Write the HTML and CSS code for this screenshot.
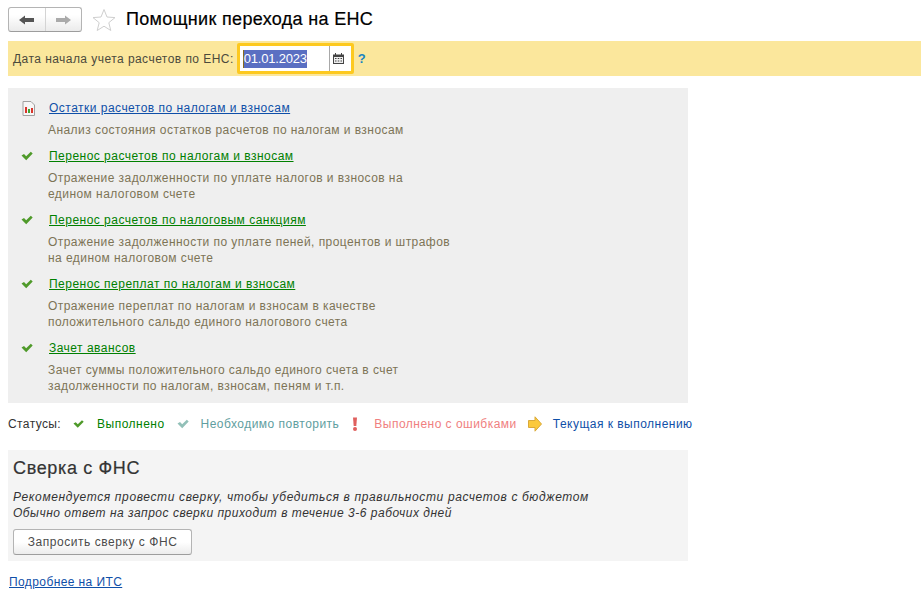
FILE: index.html
```html
<!DOCTYPE html>
<html lang="ru">
<head>
<meta charset="utf-8">
<title>Помощник перехода на ЕНС</title>
<link rel="stylesheet" href="styles.css">
</head>
<body>
<svg class="defs" width="0" height="0" aria-hidden="true">
  <symbol id="check" viewBox="0 0 12 10"><path d="M.5 4.500l2.500-1.500 2.200 2.200L9.800.8l1.900 1.700L5.200 9.200z" fill="currentColor"/></symbol>
</svg>
<header class="top">
  <div class="nav">
    <span class="nav-btn"><svg width="15" height="10" viewBox="0 0 15 10"><path d="M0 5l6-4.500V3h9v4H6v2.500z" fill="#555"/></svg></span>
    <span class="nav-btn nav-btn-last"><svg width="15" height="10" viewBox="0 0 15 10"><path d="M15 5L9 .5V3H0v4h9v2.500z" fill="#aaa"/></svg></span>
  </div>
  <svg class="star" width="24" height="24" viewBox="0 0 24 24"><path d="M12 1.500l3 7.500 8 .6-6.200 5.100 2 7.800L12 18.200l-6.800 4.300 2-7.800L1 9.600 9 9z" fill="#fff" stroke="#cfcfcf"/></svg>
  <h1 class="title">Помощник перехода на ЕНС</h1>
</header>
<div class="date-bar">
  <label class="date-label">Дата начала учета расчетов по ЕНС:</label>
  <div class="date-field">
    <span class="date-value"><span class="date-sel">01.01.2023</span></span>
    <span class="date-btn"><svg width="11" height="11" viewBox="0 0 11 11"><path d="M0 1.500h2V0h1v1.500h5V0h1v1.500h2V11H0z" fill="#444"/><path d="M1 4h9v6H1z" fill="#eee"/><path d="M2 5h1.500v1H2zM4.750 5h1.500v1h-1.500zM7.500 5H9v1H7.500zM2 7.500h1.500v1H2zM4.750 7.500h1.500v1h-1.500zM7.500 7.500H9v1H7.500z" fill="#444"/></svg></span>
  </div>
  <span class="help">?</span>
</div>
<section class="steps">
  <div class="step step-first">
    <svg class="step-icon" width="13" height="15" viewBox="0 0 13 15"><path d="M1 .5h8l3.500 3.500v10.500H1z" fill="#f6f6f6" stroke="#a0a0a0"/><rect x="3" y="6" width="2" height="6" fill="#d9352b"/><rect x="6" y="8" width="2" height="4" fill="#3fa535"/><rect x="9" y="7" width="2" height="5" fill="#d9352b"/></svg>
    <div class="step-body">
      <a class="step-link link-blue" href="#">Остатки расчетов по налогам и взносам</a>
      <p class="step-desc">Анализ состояния остатков расчетов по налогам и взносам</p>
    </div>
  </div>
  <div class="step">
    <svg class="step-icon icon-done" width="12" height="10"><use href="#check"/></svg>
    <div class="step-body">
      <a class="step-link link-green" href="#">Перенос расчетов по налогам и взносам</a>
      <p class="step-desc">Отражение задолженности по уплате налогов и взносов на<br>едином налоговом счете</p>
    </div>
  </div>
  <div class="step">
    <svg class="step-icon icon-done" width="12" height="10"><use href="#check"/></svg>
    <div class="step-body">
      <a class="step-link link-green" href="#">Перенос расчетов по налоговым санкциям</a>
      <p class="step-desc">Отражение задолженности по уплате пеней, процентов и штрафов<br>на едином налоговом счете</p>
    </div>
  </div>
  <div class="step">
    <svg class="step-icon icon-done" width="12" height="10"><use href="#check"/></svg>
    <div class="step-body">
      <a class="step-link link-green" href="#">Перенос переплат по налогам и взносам</a>
      <p class="step-desc">Отражение переплат по налогам и взносам в качестве<br>положительного сальдо единого налогового счета</p>
    </div>
  </div>
  <div class="step">
    <svg class="step-icon icon-done" width="12" height="10"><use href="#check"/></svg>
    <div class="step-body">
      <a class="step-link link-green" href="#">Зачет авансов</a>
      <p class="step-desc">Зачет суммы положительного сальдо единого счета в счет<br>задолженности по налогам, взносам, пеням и т.п.</p>
    </div>
  </div>
</section>
<div class="legend">
  <span class="legend-label">Статусы:</span>
  <svg class="legend-icon icon-done" width="11" height="10" viewBox="0 0 12 10"><use href="#check"/></svg>
  <span class="legend-text text-done">Выполнено</span>
  <svg class="legend-icon icon-repeat" width="12" height="10"><use href="#check"/></svg>
  <span class="legend-text text-repeat">Необходимо повторить</span>
  <svg class="legend-icon legend-icon-err" width="6" height="14" viewBox="0 0 6 14"><path d="M1 .500h4L4.300 9H1.700z" fill="#e0605e"/><circle cx="3" cy="12" r="2" fill="#e0605e"/></svg>
  <span class="legend-text text-err">Выполнено с ошибками</span>
  <svg class="legend-icon legend-icon-arrow" width="14" height="16" viewBox="0 0 14 16"><path d="M.5 4.500h6.500V.8L13.500 8 7 15.200v-3.700H.5z" fill="#fbc93c" stroke="#d9a93a"/></svg>
  <span class="legend-text text-current">Текущая к выполнению</span>
</div>
<section class="card">
  <h2 class="card-title">Сверка с ФНС</h2>
  <p class="card-note"><span class="note-first">Рекомендуется провести сверку, чтобы убедиться в правильности расчетов с бюджетом</span><br><span class="note-second">Обычно ответ на запрос сверки приходит в течение 3-6 рабочих дней</span></p>
  <button class="card-btn" type="button">Запросить сверку с ФНС</button>
</section>
<a class="more" href="#">Подробнее на ИТС</a>
</body>
</html>
```
FILE: styles.css
```css
* { box-sizing: border-box; }
html, body { margin: 0; padding: 0; }
body {
  width: 921px;
  height: 608px;
  overflow: hidden;
  background: #fff;
  font-family: "Liberation Sans", Arial, sans-serif;
  font-size: 12px;
  letter-spacing: .48px;
  color: #333;
}
.defs { position: absolute; }
.top {
  display: flex;
  align-items: center;
  height: 41px;
  padding: 0 0 2px 8px;
}
.nav {
  display: flex;
  width: 74px;
  height: 25px;
  border: 1px solid #b4b4b4;
  border-bottom-color: #9d9d9d;
  border-radius: 3px;
  background: linear-gradient(#fff 30%, #ebebeb);
}
.nav-btn {
  flex: 1;
  display: flex;
  align-items: center;
  justify-content: center;
  border-right: 1px solid #d4d4d4;
}
.nav-btn-last { border-right: 0; }
.star { margin-left: 10px; }
.title {
  margin: 0 0 0 10px;
  font-size: 18px;
  font-weight: 400;
  letter-spacing: .33px;
  color: #000;
  -webkit-text-stroke: .2px #000;
}
.date-bar {
  display: flex;
  align-items: center;
  height: 35px;
  margin-left: 8px;
  padding-left: 5px;
  background: #fbe79c;
}
.date-label { color: #4b4a3c; letter-spacing: .45px; }
.date-field {
  display: flex;
  align-items: center;
  width: 117px;
  height: 31px;
  margin-left: 3px;
  border: 3px solid #fdc91f;
  border-radius: 2px;
  background: #fff;
  padding-left: 3px;
}
.date-value { flex: 1; }
.date-sel {
  display: inline-block;
  height: 18px;
  line-height: 18px;
  background: #5a6fc2;
  border-left: 1px solid #8a6d1c;
  color: #fff;
  font-size: 13px;
  letter-spacing: -.2px;
}
.date-btn {
  display: flex;
  align-items: center;
  justify-content: center;
  width: 19px;
  height: 25px;
  border-left: 1px solid #a8a8a8;
  margin-right: 3px;
}
.help {
  margin-left: 4px;
  color: #1a84c2;
  font-size: 13px;
  font-weight: 700;
  letter-spacing: 0;
}
.steps {
  width: 680px;
  height: 315px;
  margin: 12px 0 0 8px;
  padding: 12px 0 0 13px;
  background: #efefef;
}
.step {
  display: flex;
  align-items: flex-start;
  margin-bottom: 10px;
}
.step-icon { flex: none; margin-top: 3px; }
.icon-done { color: #4f9a2a; margin-right: 16px; }
.step-first .step-icon { margin: 1px 14px 0 1px; }
.step-link { display: inline-block; line-height: 16px; }
.link-blue { color: #0f4fa8; }
.link-green { color: #008000; }
.step-desc {
  margin: 6px 0 0 -1px;
  line-height: 16px;
  letter-spacing: .44px;
  color: #7d7456;
}
.legend {
  display: flex;
  align-items: center;
  height: 16px;
  margin: 13px 0 0 8px;
}
.legend-label { color: #333; margin-right: 12px; letter-spacing: .4px; }
.legend-icon { flex: none; }
.legend .icon-done { margin-right: 13px; }
.icon-repeat { color: #92c0b8; margin-right: 12px; }
.legend-icon-err { margin-right: 16px; }
.legend-icon-arrow { margin-right: 11px; }
.text-done { color: #008000; margin-right: 12px; }
.text-repeat { color: #5f9ea0; margin-right: 13px; }
.text-err { color: #f08080; margin-right: 11px; }
.text-current { color: #0f4fa8; }
.card {
  width: 680px;
  height: 111px;
  margin: 18px 0 0 8px;
  padding: 8px 0 0 5px;
  background: #f4f4f4;
}
.card-title {
  margin: 0;
  font-size: 18px;
  font-weight: 400;
  line-height: 20px;
  letter-spacing: .65px;
  color: #333;
  -webkit-text-stroke: .2px #333;
}
.card-note {
  margin: 11px 0 0;
  line-height: 16px;
  font-style: italic;
  color: #333;
}
.note-first { letter-spacing: .63px; }
.note-second { letter-spacing: .51px; }
.card-btn {
  display: block;
  width: 179px;
  height: 26px;
  margin: 8px 0 0;
  border: 1px solid #b4b4b4;
  border-bottom-color: #9d9d9d;
  border-radius: 3px;
  background: linear-gradient(#fff 50%, #ececec);
  font: inherit;
  letter-spacing: .55px;
  color: #4b4b4b;
}
.more {
  display: inline-block;
  margin: 13px 0 0 9px;
  line-height: 16px;
  letter-spacing: .4px;
  color: #0f4fa8;
}
```
